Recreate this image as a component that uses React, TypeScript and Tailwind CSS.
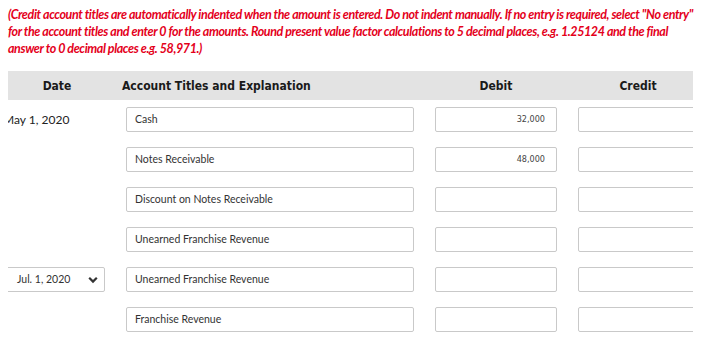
import React from "react";

type Row = {
  date?: string;
  dateSelect?: boolean;
  account: string;
  debit?: string;
  credit?: string;
};

const rows: Row[] = [
  { date: "May 1, 2020", account: "Cash", debit: "32,000" },
  { account: "Notes Receivable", debit: "48,000" },
  { account: "Discount on Notes Receivable" },
  { account: "Unearned Franchise Revenue" },
  { date: "Jul. 1, 2020", dateSelect: true, account: "Unearned Franchise Revenue" },
  { account: "Franchise Revenue" },
];

const cols = "grid grid-cols-[102px_288px_122px_120px] gap-x-[21px]";

function Chevron() {
  return (
    <svg width="10" height="8" viewBox="0 0 10 8" className="text-[#333]">
      <path d="M1.2 1.8 L5 5.6 L8.8 1.8" fill="none" stroke="currentColor" strokeWidth="2.2" />
    </svg>
  );
}

function Box({ children, right }: { children?: React.ReactNode; right?: boolean }) {
  return (
    <div
      className={
        "h-[25px] border border-[#c9c9c9] rounded-[2px] bg-white flex items-center " +
        (right ? "justify-end pr-[11px]" : "pl-[8px]")
      }
    >
      {children}
    </div>
  );
}

export default function App() {
  return (
    <div className="w-[701px] h-[341px] bg-white overflow-hidden font-['Lato',sans-serif]">
      <p className="pl-[8px] pt-[6px] whitespace-nowrap text-[12.5px] leading-[17px] font-bold italic text-[#e4001b] tracking-[-0.4px]">
        (Credit account titles are automatically indented when the amount is entered. Do not indent manually. If no entry
        is required, select "No entry"
        <br />
        for the account titles and enter 0 for the amounts. Round present value factor calculations to 5 decimal places,
        e.g. 1.25124 and the final
        <br />
        answer to 0 decimal places e.g. 58,971.)
      </p>

      <div className="pl-[8px] mt-[14px]">
        <div className="w-[685px] overflow-hidden">
          <div className="-ml-[5px] w-[700px]">
            <div className={cols + " h-[29px] bg-[#e3e3e3] items-center font-['DejaVu_Sans_Condensed',sans-serif] font-bold text-[12px] text-[#1a1a1a]"}>
              <div className="text-center pl-[6px]">Date</div>
              <div className="-ml-[4px]">Account Titles and Explanation</div>
              <div className="text-center">Debit</div>
              <div className="text-center">Credit</div>
            </div>

            <div className="flex flex-col gap-[15px] pt-[7px]">
              {rows.map((r, i) => (
                <div key={i} className={cols + " items-center"}>
                  <div>
                    {r.dateSelect ? (
                      <div className="h-[25px] border border-[#c9c9c9] rounded-[2px] flex items-center justify-between pl-[13px] pr-[6px] text-[10.5px] text-[#333]">
                        <span>{r.date}</span>
                        <Chevron />
                      </div>
                    ) : r.date ? (
                      <div className="text-[12px] text-[#222]">{r.date}</div>
                    ) : null}
                  </div>
                  <Box>
                    <span className="text-[10.5px] text-[#333]">{r.account}</span>
                  </Box>
                  <Box right>
                    {r.debit && (
                      <span className="font-['DejaVu_Sans_Condensed',sans-serif] text-[9px] text-[#444]">{r.debit}</span>
                    )}
                  </Box>
                  <Box right>{r.credit}</Box>
                </div>
              ))}
            </div>
          </div>
        </div>
      </div>
    </div>
  );
}
